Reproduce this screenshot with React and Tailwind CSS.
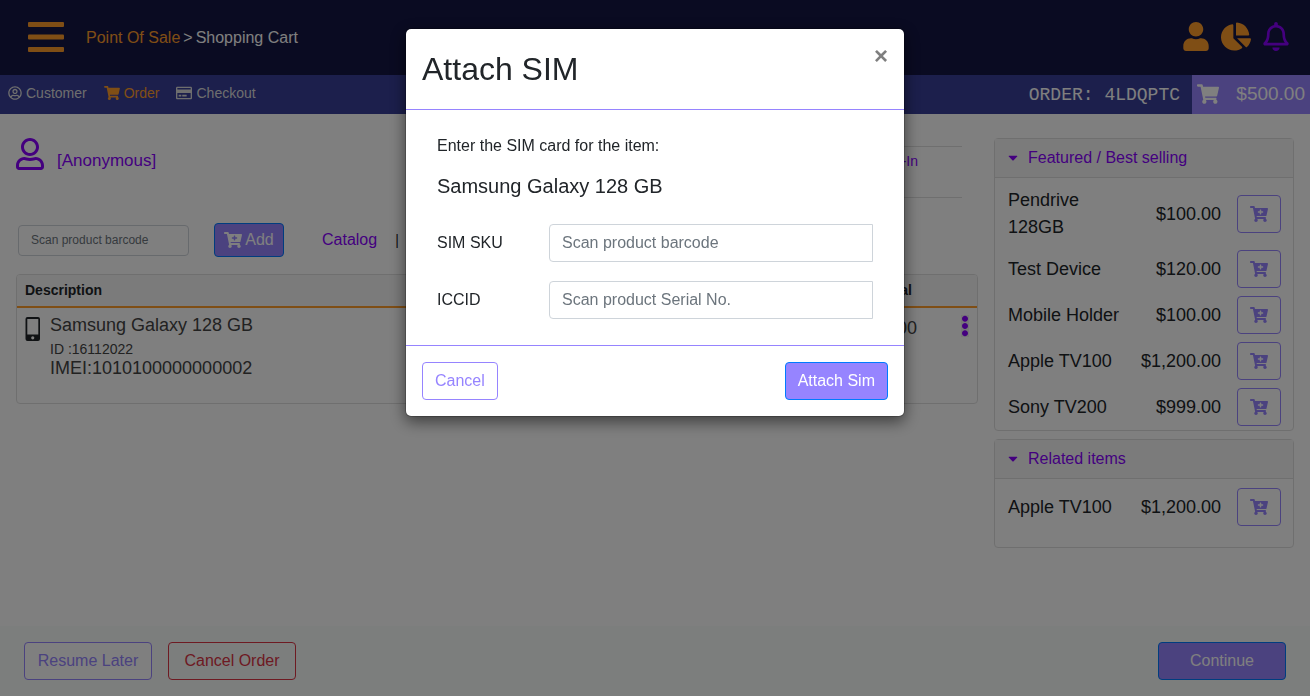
import React, { useState } from 'react';
import {
  FaCaretDown,
  FaCartPlus,
  FaChartPie,
  FaEllipsisV,
  FaRegBell,
  FaRegCreditCard,
  FaRegUser,
  FaRegUserCircle,
  FaShoppingCart,
  FaUser,
} from 'react-icons/fa';

const FEATURED = [
  { id: 1, name: 'Pendrive 128GB', price: '$100.00' },
  { id: 2, name: 'Test Device', price: '$120.00' },
  { id: 3, name: 'Mobile Holder', price: '$100.00' },
  { id: 4, name: 'Apple TV100', price: '$1,200.00' },
  { id: 5, name: 'Sony TV200', price: '$999.00' },
];

const RELATED = [{ id: 4, name: 'Apple TV100', price: '$1,200.00' }];

function MenuIcon() {
  return (
    <svg viewBox="0 0 36 30" className="w-9 h-[30px]" fill="currentColor" aria-hidden="true">
      <rect x="0" y="0" width="36" height="5" rx="1" />
      <rect x="0" y="12.5" width="36" height="5" rx="1" />
      <rect x="0" y="25" width="36" height="5" rx="1" />
    </svg>
  );
}

function PhoneIcon() {
  return (
    <svg viewBox="0 0 16 24" className="w-4 h-6 mt-0.5 text-[#212529]" fill="currentColor" fillRule="evenodd" aria-hidden="true">
      <path d="M2.5 0h10.500a2 2 0 0 1 2 2v20a2 2 0 0 1-2 2H2.500a2 2 0 0 1-2-2V2a2 2 0 0 1 2-2zM2.300 2v15.500h11V2zM7.750 19.200a1.600 1.600 0 1 0 0 3.200 1.600 1.600 0 0 0 0-3.200z" />
    </svg>
  );
}

function TopBar() {
  return (
    <header className="h-[75px] bg-[#141644] flex items-center justify-between pl-7 pr-[21px] pb-0.5">
      <div className="flex items-center">
        <button aria-label="Menu" className="text-[#ff9d2b]"><MenuIcon /></button>
        <nav className="ml-[22px] pt-0.5 flex items-center gap-[3px] text-white">
          <a href="#pos" className="text-[#ff9d2b]">Point Of Sale</a>
          <span>&gt;</span>
          <span>Shopping Cart</span>
        </nav>
      </div>
      <div className="flex items-center gap-3 text-[#ff9d2b]">
        <button aria-label="Account"><FaUser className="w-[26px] h-[29px]" /></button>
        <button aria-label="Reports"><FaChartPie className="w-[30px] h-[29px]" /></button>
        <button aria-label="Notifications" className="text-[#8800ff]"><FaRegBell className="w-[26px] h-[29px]" /></button>
      </div>
    </header>
  );
}

function StepBar() {
  return (
    <div className="h-[39px] bg-[#383e98] flex items-stretch justify-between">
      <nav className="flex items-center gap-[17px] pl-2 pb-[3px] text-sm text-[#dddddd]">
        <a href="#customer" className="flex items-center gap-1"><FaRegUserCircle className="w-3.5 h-3.5" />Customer</a>
        <a href="#order" className="flex items-center gap-1 text-[#ff9d2b]"><FaShoppingCart className="w-4 h-3.5" />Order</a>
        <a href="#checkout" className="flex items-center gap-1"><FaRegCreditCard className="w-4 h-4" />Checkout</a>
      </nav>
      <div className="flex items-stretch text-white">
        <div className="flex items-center pr-3 font-['Courier_New','Liberation_Mono',monospace] text-lg">ORDER: 4LDQPTC</div>
        <div className="w-[118px] bg-[#9684ff] flex items-center justify-between px-[5px] pb-0.5">
          <FaShoppingCart className="w-[22px] h-5" />
          <span className="pt-0.5 text-[19px]">$500.00</span>
        </div>
      </div>
    </div>
  );
}

function ItemCard({ title, items, className = '' }) {
  const [open, setOpen] = useState(true);
  return (
    <section className={`border border-[#dfdfdf] rounded ${className}`}>
      <button onClick={() => setOpen(!open)} className="w-full h-[39px] px-[13px] flex items-center gap-2.5 bg-[#f7f7f7] border-b border-[#dfdfdf] text-[#8800ff]">
        <FaCaretDown className="w-2.5 h-4 pb-px" />
        {title}
      </button>
      {open && (
        <ul className="pt-[5px] pl-[13px] pr-3 text-lg leading-[27px]">
          {items.map((it) => (
            <li key={it.id} className="flex items-center justify-between py-1 first:pb-[5px]">
              <span className="w-[120px]">{it.name}</span>
              <span className="flex-1 text-right pr-4">{it.price}</span>
              <button aria-label={`Add ${it.name}`} className="w-11 h-[38px] border border-[#9684ff] rounded text-[#9684ff] flex items-center justify-center">
                <FaCartPlus className="w-[18px] h-4" />
              </button>
            </li>
          ))}
        </ul>
      )}
    </section>
  );
}

function OrderTable() {
  return (
    <div className="mt-[17px] ml-4 h-[130px] border border-[#dfdfdf] rounded overflow-hidden">
      <table className="w-full border-collapse">
        <thead>
          <tr className="h-8 bg-[#f7f7f7] border-b-2 border-[#ff9d2b] text-sm text-[#212529]">
            <th className="pl-2 pb-0.5 text-left">Description</th>
            <th className="pb-0.5 text-right">Qty</th>
            <th className="pb-0.5 pr-[5px] text-right">Total</th>
            <th className="w-[60px]" aria-label="Actions" />
          </tr>
        </thead>
        <tbody>
          <tr className="align-top text-lg text-[#444444]">
            <td className="pl-2 pt-[5px]">
              <div className="flex gap-[9px]">
                <div className="pt-0.5"><PhoneIcon /></div>
                <div>
                  <div className="leading-6">Samsung Galaxy 128 GB</div>
                  <div className="text-sm leading-5 mt-0.5">ID :16112022</div>
                  <div className="leading-[18px]">IMEI:1010100000000002</div>
                </div>
              </div>
            </td>
            <td className="pt-2 text-right leading-6">1</td>
            <td className="pt-2 text-right leading-6">$500.00</td>
            <td className="pt-[7px]">
              <button aria-label="Row menu" className="ml-auto mr-2 block bg-[#efefef] text-[#8800ff]"><FaEllipsisV className="w-2 h-[22px]" /></button>
            </td>
          </tr>
        </tbody>
      </table>
    </div>
  );
}

function AttachSimModal({ onClose }) {
  return (
    <div className="fixed inset-0 bg-black/50 flex items-start justify-center pt-7 px-4">
      <div role="dialog" aria-modal="true" aria-labelledby="sim-title" className="w-full max-w-[500px] bg-white bg-clip-padding border border-black/20 rounded-md shadow-[0_5px_15px_rgba(0,0,0,0.5)]">
        <div className="flex items-start justify-between p-4 border-b border-[#9684ff]">
          <h1 id="sim-title" className="text-[32px] leading-[48px]">Attach SIM</h1>
          <button onClick={onClose} aria-label="Close" className="text-2xl leading-[22px] font-bold text-[#7f7f7f]">×</button>
        </div>
        <div className="px-[31px] pt-6 pb-[26px]">
          <p>Enter the SIM card for the item:</p>
          <h2 className="mt-4 text-xl leading-6">Samsung Galaxy 128 GB</h2>
          <div className="mt-[26px] flex flex-col gap-[19px]">
            <div className="flex items-center">
              <label htmlFor="sku" className="w-28">SIM SKU</label>
              <input id="sku" placeholder="Scan product barcode" className="flex-1 min-w-0 h-[38px] px-3 border border-[#ced4da] rounded-l outline-none placeholder:text-[#6c757d]" />
            </div>
            <div className="flex items-center">
              <label htmlFor="iccid" className="w-28">ICCID</label>
              <input id="iccid" placeholder="Scan product Serial No." className="flex-1 min-w-0 h-[38px] px-3 border border-[#ced4da] rounded-l outline-none placeholder:text-[#6c757d]" />
            </div>
          </div>
        </div>
        <div className="flex items-center justify-between p-4 border-t border-[#9684ff]">
          <button onClick={onClose} className="h-[38px] px-3 border border-[#9684ff] rounded text-[#9684ff]">Cancel</button>
          <button className="h-[38px] px-3 border border-[#007bff] rounded bg-[#9684ff] text-white">Attach Sim</button>
        </div>
      </div>
    </div>
  );
}

export default function App() {
  const [simOpen, setSimOpen] = useState(true);

  return (
    <div className="min-h-screen flex flex-col bg-white text-base text-[#212529] font-['Liberation_Sans',Arial,sans-serif]">
      <TopBar />
      <StepBar />

      <main className="flex-1 flex gap-4 pr-4 pt-6">
        <div className="flex-1 min-w-0">
          {/* customer + order options */}
          <div className="flex items-start justify-between pl-4 pr-4">
            <a href="#anonymous" className="flex items-start gap-[13px] text-[17px] leading-6 text-[#8800ff]">
              <FaRegUser className="w-7 h-8" />
              <span className="pt-[11px]">[Anonymous]</span>
            </a>
            <div className="mt-2 w-[460px] h-[52px] border-y border-[#dfdfdf] flex justify-end pr-11 pt-1 text-sm">
              <a href="#trade-in" className="leading-5 text-[#8800ff]">Trade-In</a>
            </div>
          </div>

          {/* scan product */}
          <div className="mt-[25px] pl-[18px] flex items-center">
            <input aria-label="Product barcode" placeholder="Scan product barcode" className="w-[171px] h-[31px] px-3 border border-[#ced4da] rounded text-xs outline-none placeholder:text-[#6c757d]" />
            <button className="ml-[25px] w-[70px] h-[34px] flex items-center justify-center gap-[3px] border border-[#007bff] rounded bg-[#9684ff] text-white">
              <FaCartPlus className="w-[18px] h-4" />Add
            </button>
            <a href="#catalog" className="ml-[38px] text-[#8800ff]">Catalog</a>
            <span className="ml-[18px] text-sm">|</span>
          </div>

          <OrderTable />
        </div>

        <aside className="w-[300px] flex flex-col gap-2">
          <ItemCard title="Featured / Best selling" items={FEATURED} />
          <ItemCard title="Related items" items={RELATED} className="min-h-[109px]" />
        </aside>
      </main>

      <footer className="flex items-center gap-4 px-6 py-4 bg-[#f8fcfb]">
        <button className="w-32 h-[38px] border border-[#9684ff] rounded bg-white text-[#9684ff]">Resume Later</button>
        <button className="w-32 h-[38px] border border-[#dc3545] rounded text-[#dc3545]">Cancel Order</button>
        <button className="ml-auto w-32 h-[38px] border border-[#007bff] rounded bg-[#9684ff] text-white">Continue</button>
      </footer>

      {simOpen && <AttachSimModal onClose={() => setSimOpen(false)} />}
    </div>
  );
}
